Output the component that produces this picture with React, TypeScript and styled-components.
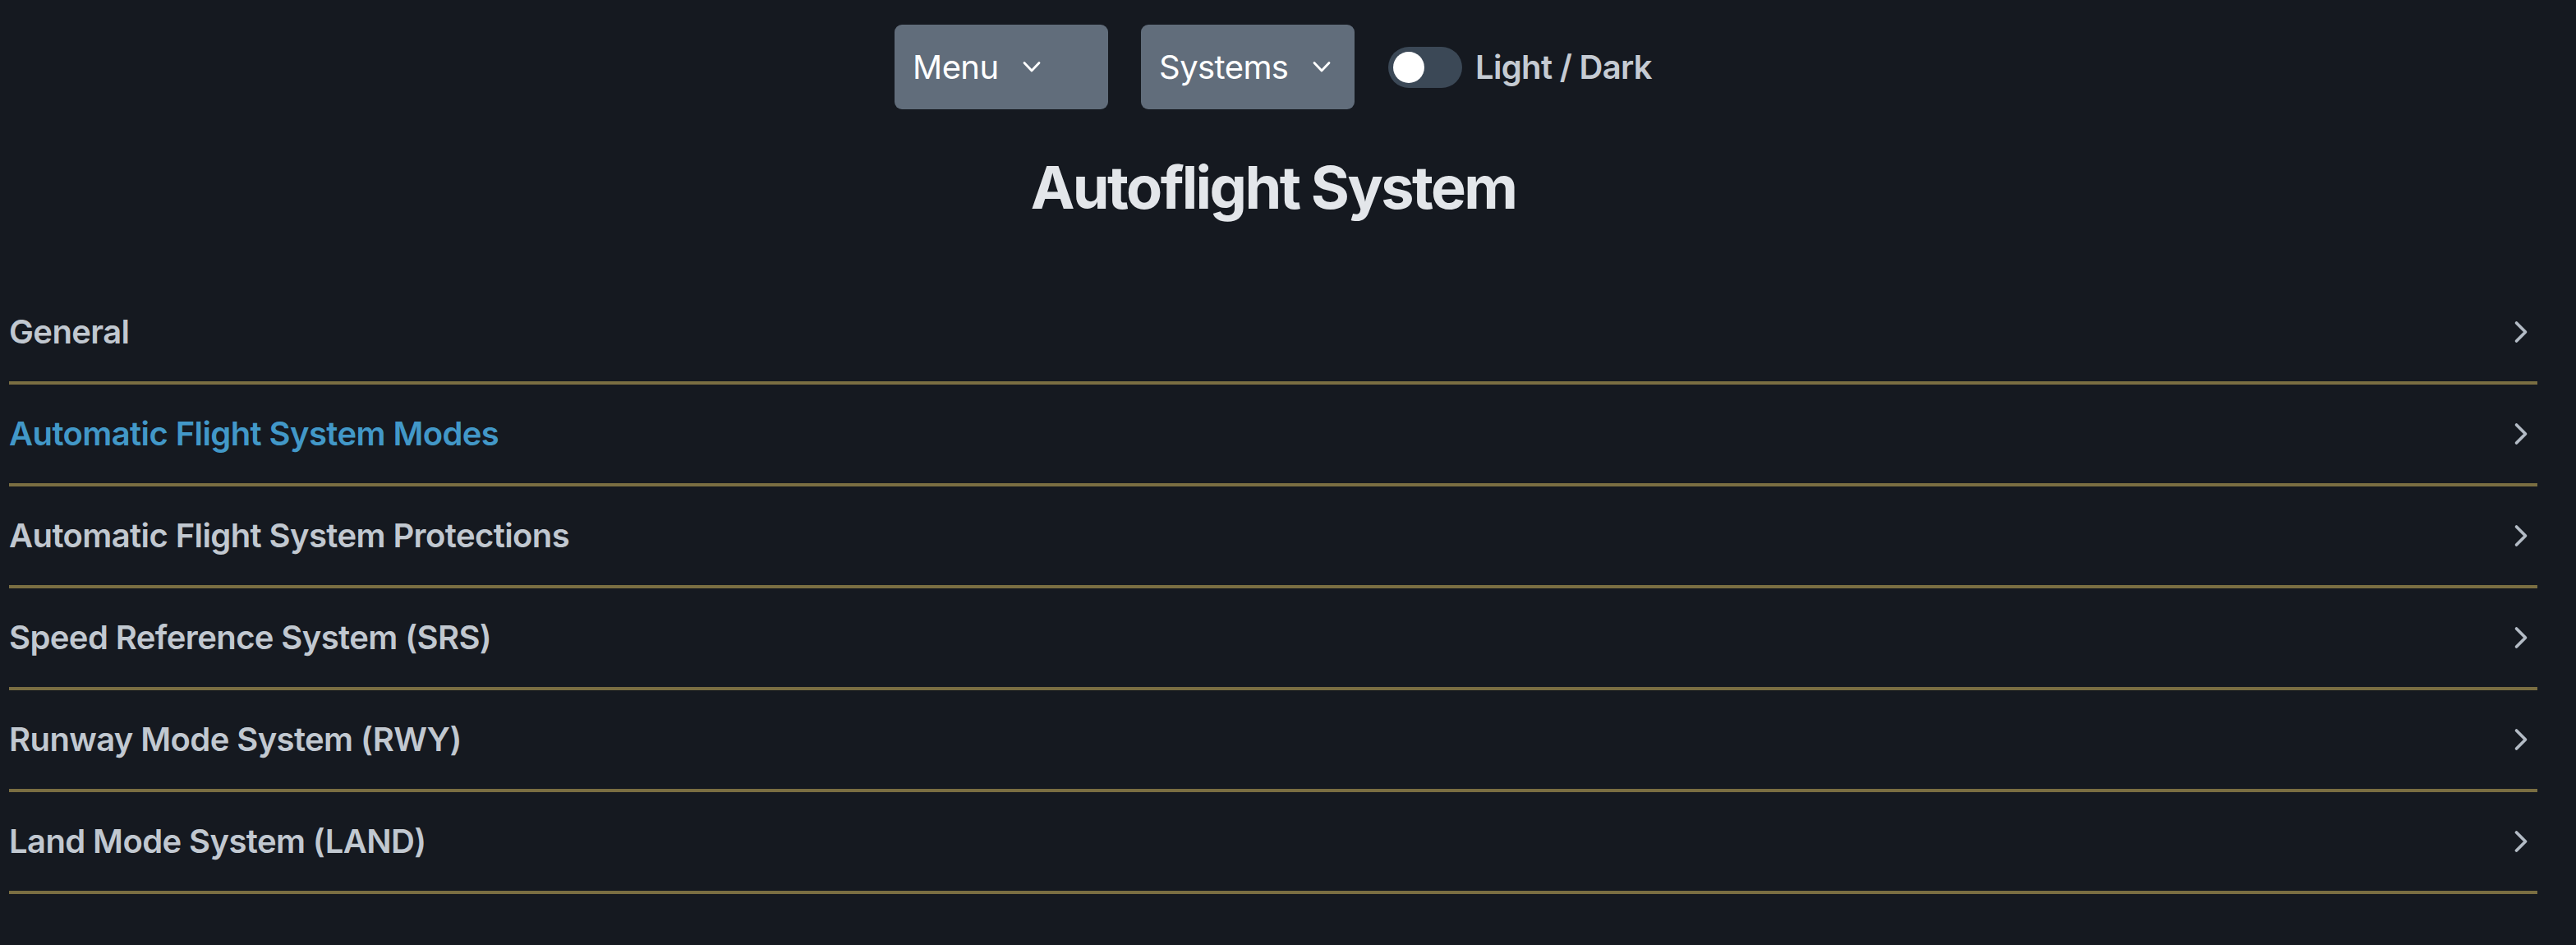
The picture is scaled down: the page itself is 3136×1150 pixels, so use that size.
import React from "react";
import styled, { createGlobalStyle } from "styled-components";

const GlobalStyle = createGlobalStyle`
    body {
        margin: 0;
        background-color: #151920;
        font-family: "Inter", "Noto Sans", sans-serif;
    }
`

/* layout */
const Page = styled.div`
    width: 3100px;
    min-height: 1150px;
    background-color: #151920;
`
const TopBar = styled.div`
    display: flex;
    justify-content: center;
    align-items: center;
    padding-top: 30px;
`
const DropButton = styled.button`
    display: flex;
    align-items: center;
    gap: 30px;
    width: 260px;
    height: 103px;
    margin-right: 40px;
    padding: 0 0 0 22px;
    border: none;
    border-radius: 9px;
    background-color: #616d7b;
    color: #ffffff;
    font-family: inherit;
    font-size: 40px;
    font-weight: 400;
    letter-spacing: -0.6px;
    cursor: pointer;
`
const ToggleWrap = styled.label`
    display: flex;
    align-items: center;
    gap: 16px;
    margin-left: 1px;
`
const Track = styled.span`
    display: flex;
    align-items: center;
    width: 90px;
    height: 50px;
    padding: 0 6px;
    box-sizing: border-box;
    border-radius: 25px;
    background-color: #3b4856;
`
const Knob = styled.span`
    width: 38px;
    height: 38px;
    border-radius: 50%;
    background-color: #ffffff;
`
const ToggleText = styled.span`
    color: #c5cbd3;
    font-size: 40px;
    font-weight: 600;
    letter-spacing: -0.7px;
`
const Title = styled.h1`
    margin: 52px 0 0;
    text-align: center;
    color: #e3e6ea;
    font-size: 72px;
    line-height: 86px;
    font-weight: 700;
    letter-spacing: -2.6px;
`
const List = styled.div`
    margin: 73px 11px 0;
`
const Row = styled.div<{ $active?: boolean }>`
    display: flex;
    justify-content: space-between;
    align-items: center;
    padding: 32px 0;
    border-bottom: 4px solid #7a6e42;
    color: ${p => (p.$active ? "#4298c8" : "#c1c8d0")};
    font-size: 40px;
    line-height: 56px;
    font-weight: 600;
    letter-spacing: -0.6px;
    cursor: pointer;
`
const RowIcon = styled.svg`
    width: 44px;
    height: 44px;
    margin-right: -2px;
    color: #b3bbc5;
`

const DownIcon = () => (
    <svg width="22" height="15" viewBox="0 0 22 15" fill="none">
        <polyline points="2,2.5 11,12 20,2.5" stroke="#ffffff" strokeWidth="2.8"
            strokeLinecap="round" strokeLinejoin="round" />
    </svg>
)

const items = [
    "General",
    "Automatic Flight System Modes",
    "Automatic Flight System Protections",
    "Speed Reference System (SRS)",
    "Runway Mode System (RWY)",
    "Land Mode System (LAND)",
]

const App = () => {
    return (
        <Page>
            <GlobalStyle />
            <TopBar>
                <DropButton>Menu <DownIcon /></DropButton>
                <DropButton>Systems <DownIcon /></DropButton>
                <ToggleWrap>
                    <Track><Knob /></Track>
                    <ToggleText>Light / Dark</ToggleText>
                </ToggleWrap>
            </TopBar>

            <Title>Autoflight System</Title>

            <List>
                {items.map((item, i) => (
                    <Row key={item} $active={i === 1}>
                        <span>{item}</span>
                        <RowIcon viewBox="0 0 24 24" fill="none" stroke="currentColor"
                            strokeWidth="2" strokeLinecap="round" strokeLinejoin="round">
                            <path d="m9 18 6-6-6-6" />
                        </RowIcon>
                    </Row>
                ))}
            </List>
        </Page>
    )
}
export default App;
